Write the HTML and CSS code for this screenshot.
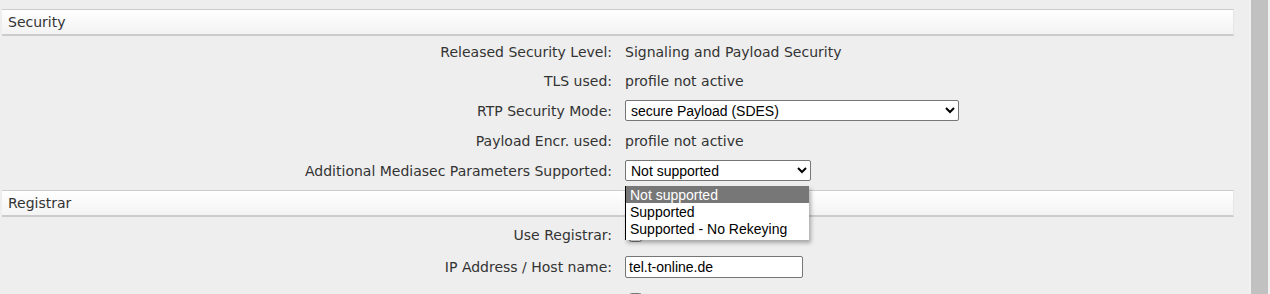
FILE: index.html
```html
<!DOCTYPE html>
<html>
<head>
<meta charset="utf-8">
<link rel="stylesheet" href="styles.css">
</head>
<body>

<div class="screen">
  <div class="page">

    <section class="group">
      <h2 class="group-head">Security</h2>
      <div class="fields fields-security">
        <div class="row">
          <span class="label">Released Security Level:</span>
          <span class="value">Signaling and Payload Security</span>
        </div>
        <div class="row">
          <span class="label">TLS used:</span>
          <span class="value">profile not active</span>
        </div>
        <div class="row row-select">
          <span class="label">RTP Security Mode:</span>
          <span class="value">
            <select class="sel sel-wide">
              <option>secure Payload (SDES)</option>
            </select>
          </span>
        </div>
        <div class="row">
          <span class="label">Payload Encr. used:</span>
          <span class="value">profile not active</span>
        </div>
        <div class="row row-select">
          <span class="label">Additional Mediasec Parameters Supported:</span>
          <span class="value">
            <select class="sel sel-narrow">
              <option>Not supported</option>
              <option>Supported</option>
              <option>Supported - No Rekeying</option>
            </select>
            <!-- the open option list, drawn over the rows below -->
            <ul class="droplist">
              <li class="picked">Not supported</li>
              <li>Supported</li>
              <li>Supported - No Rekeying</li>
            </ul>
          </span>
        </div>
      </div>
    </section>

    <section class="group">
      <h2 class="group-head">Registrar</h2>
      <div class="fields fields-registrar">
        <div class="row row-tall">
          <span class="label">Use Registrar:</span>
          <span class="value"><input type="checkbox"></span>
        </div>
        <div class="row row-tall">
          <span class="label">IP Address / Host name:</span>
          <span class="value"><input type="text" class="txt" value="tel.t-online.de"></span>
        </div>
        <div class="row row-tall">
          <span class="label"></span>
          <span class="value"><input type="checkbox"></span>
        </div>
      </div>
    </section>

  </div>
  <div class="scrollbar"><div class="thumb"></div></div>
</div>

</body>
</html>
```

FILE: styles.css
```css
html, body {
    margin: 0;
    height: 294px;
    overflow: hidden;
}

body {
    background-color: #eeeeee;
    color: #333333;
    font-family: "DejaVu Sans", Verdana, sans-serif;
    font-size: 14px;
}

.screen {
    display: flex;
    height: 294px;
}

.page {
    width: 1234px;
    padding: 9px 0 0 2px;
}

.group-head {
    margin: 0;
    height: 24px;
    line-height: 25px;
    padding-left: 6px;
    font-size: 14px;
    font-weight: normal;
    color: #333333;
    border-top: 1px solid #cccccc;
    border-bottom: 2px solid #cccccc;
    border-right: 1px solid #e6e6e6;
    background: linear-gradient(#ffffff, #f3f3f3);
}

.fields-security {
    padding-top: 1px;
    margin-bottom: 4px;
}

.fields-registrar {
    padding-top: 2px;
}

.row {
    display: grid;
    grid-template-columns: 610px 1fr;
    align-items: center;
    height: 29px;
}

.row-select {
    height: 31px;
}

.row-tall {
    height: 32px;
}

.label {
    text-align: right;
    white-space: nowrap;
}

.value {
    position: relative;
    display: flex;
    align-items: center;
    height: 100%;
    padding-left: 13px;
    white-space: nowrap;
}

.sel {
    height: 21px;
    margin: 0;
    padding: 0 0 0 1px;
    font-family: "Liberation Sans", Arial, sans-serif;
    font-size: 14px;
    color: #000000;
    background-color: #ffffff;
    border: 1px solid #767676;
    border-radius: 2px;
}

.sel-wide {
    width: 334px;
}

.sel-narrow {
    width: 186px;
}

.txt {
    width: 178px;
    height: 22px;
    box-sizing: border-box;
    margin: 0;
    padding: 0 3px;
    font-family: "Liberation Sans", Arial, sans-serif;
    font-size: 14px;
    color: #000000;
    border: 1px solid #767676;
    border-radius: 2px;
    background: #ffffff;
}

input[type="checkbox"] {
    margin: 3px 3px 3px 4px;
}

.droplist {
    position: absolute;
    top: 100%;
    left: 13px;
    z-index: 5;
    width: 183px;
    margin: 0;
    padding: 0 0 3px 0;
    list-style: none;
    background: #ffffff;
    border-left: 1px solid #000000;
    box-shadow: 2px 3px 4px rgba(0, 0, 0, 0.3);
    font-family: "Liberation Sans", Arial, sans-serif;
    font-size: 14px;
    color: #000000;
}

.droplist li {
    height: 17px;
    line-height: 18px;
    padding-left: 4px;
}

.droplist li.picked {
    background-color: #777777;
    color: #ffffff;
}

.scrollbar {
    width: 21px;
    margin-left: 15px;
    background-color: #f1f1f1;
}

.thumb {
    height: 100%;
    margin: 0 2px;
    background-color: #c1c1c1;
}
```
